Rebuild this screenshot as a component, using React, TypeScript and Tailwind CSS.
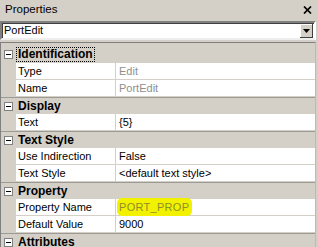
import React from "react";

type Row = { name: string; value: string; kind?: "disabled" | "marked" };
type Group = { title: string; rows: Row[]; focused?: boolean };

const groups: Group[] = [
  {
    title: "Identification",
    focused: true,
    rows: [
      { name: "Type", value: "Edit", kind: "disabled" },
      { name: "Name", value: "PortEdit", kind: "disabled" },
    ],
  },
  { title: "Display", rows: [{ name: "Text", value: "{5}" }] },
  {
    title: "Text Style",
    rows: [
      { name: "Use Indirection", value: "False" },
      { name: "Text Style", value: "<default text style>" },
    ],
  },
  {
    title: "Property",
    rows: [
      { name: "Property Name", value: "PORT_PROP", kind: "marked" },
      { name: "Default Value", value: "9000" },
    ],
  },
  { title: "Attributes", rows: [] },
];

const MinusBox = () => (
  <div className="w-[9px] h-[9px] border border-[#808080] bg-white flex items-center justify-center">
    <div className="w-[5px] h-px bg-black" />
  </div>
);

const GroupHeader = ({ g, first }: { g: Group; first: boolean }) => (
  <div
    className={`flex items-center bg-[#d4d0c8] ${
      first ? "h-[20px] pt-[3px]" : "h-[17px] border-t border-[#9c9a94]"
    }`}
  >
    <div className="w-[15px] flex justify-center shrink-0">
      <MinusBox />
    </div>
    <span
      className={`font-bold text-[12px] leading-[13px] px-[1px] ${
        g.focused ? "border border-dotted border-black" : "border border-transparent"
      }`}
    >
      {g.title}
    </span>
  </div>
);

const PropRow = ({ r }: { r: Row }) => (
  <div className="flex h-[17px]">
    <div className="w-[15px] shrink-0 bg-[#d4d0c8]" />
    <div className="w-[100px] shrink-0 bg-white border-b border-r border-[#d4d0c8] pl-[2px] flex items-center">
      {r.name}
    </div>
    <div className="flex-1 bg-white border-b border-[#d4d0c8] pl-[3px] flex items-center">
      {r.kind === "marked" ? (
        <span className="bg-[#f2f200] text-[#8e8e2a] rounded-[5px] -ml-[2px] pl-[2px] pr-[3px] h-[18px] flex items-center tracking-[0.3px]">
          {r.value}
        </span>
      ) : (
        <span className={r.kind === "disabled" ? "text-[#8f8f8f]" : ""}>{r.value}</span>
      )}
    </div>
  </div>
);

const App = () => {
  return (
    <div className="w-[318px] h-[247px] overflow-hidden bg-[#d4d0c8] text-black text-[11px] font-['Liberation_Sans',Arial,sans-serif]">
      {/* title bar */}
      <div className="h-[20px] flex items-center justify-between pl-[5px] pr-[5px]">
        <span className="text-[11.5px]">Properties</span>
        <svg width="9" height="8" viewBox="0 0 9 8" className="mr-[1px]">
          <path d="M1 0.5 L8 7.5 M8 0.5 L1 7.5" stroke="black" strokeWidth="1.7" />
        </svg>
      </div>

      {/* object picker */}
      <div className="mt-[1px] w-[316px] h-[19px] flex items-center bg-white border-2 border-t-[#808080] border-l-[#808080] border-r-white border-b-[#eeeeee] shadow-[inset_1px_1px_0_#404040]">
        <span className="flex-1 pl-[2px]">PortEdit</span>
        <div className="w-[13px] h-[14px] mr-[1px] bg-[#d4d0c8] flex items-center justify-center shadow-[inset_-1px_-1px_0_#404040,inset_1px_1px_0_#ffffff]">
          <svg width="7" height="4" viewBox="0 0 7 4">
            <path d="M0 0 H7 L3.5 4 Z" fill="black" />
          </svg>
        </div>
      </div>

      {/* property grid */}
      <div className="mt-[2px] w-[316px] border-t border-l border-[#808080] border-r border-r-[#bdbab3]">
        {groups.map((g, i) => (
          <div key={g.title}>
            <GroupHeader g={g} first={i === 0} />
            {g.rows.map((r) => (
              <PropRow key={r.name} r={r} />
            ))}
          </div>
        ))}
      </div>
    </div>
  );
};

export default App;
